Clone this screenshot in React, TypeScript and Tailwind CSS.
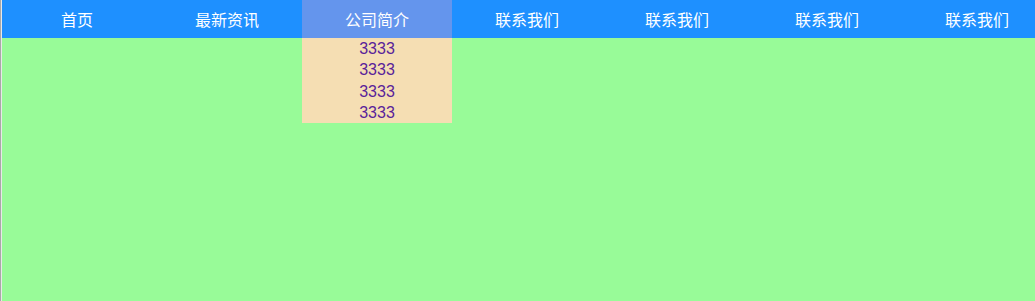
import React from "react";

const items = ["首页", "最新资讯", "公司简介", "联系我们", "联系我们", "联系我们", "联系我们"];

export default function App() {
  return (
    <div
      className="flex h-[301px] w-[1035px] overflow-hidden bg-[#98fb98]"
      style={{ fontFamily: '"Noto Sans CJK SC", "Noto Sans", sans-serif' }}
    >
      <div className="w-px shrink-0 bg-[#a8a8a8]" />
      <div className="w-px shrink-0 bg-[#e8e8e8]" />
      <div className="min-w-0 flex-1">
        <div className="flex h-[38px] w-[1050px] bg-[#1e90ff]">
          {items.map((t, i) => (
            <div
              key={i}
              className={
                i === 2
                  ? "relative h-[38px] w-[150px] shrink-0 bg-[#6495ed] text-center text-[16px] leading-[38px] text-white"
                  : "relative h-[38px] w-[150px] shrink-0 text-center text-[16px] leading-[38px] text-white"
              }
            >
              {t}
              {i === 2 && (
                <div
                  className="absolute left-0 top-[38px] w-[150px] bg-[#f5deb3] text-[16px] leading-[21.25px] text-[#5a1f9a]"
                  style={{ fontFamily: '"Liberation Sans", Arial, sans-serif' }}
                >
                  <div>3333</div>
                  <div>3333</div>
                  <div>3333</div>
                  <div>3333</div>
                </div>
              )}
            </div>
          ))}
        </div>
      </div>
    </div>
  );
}
